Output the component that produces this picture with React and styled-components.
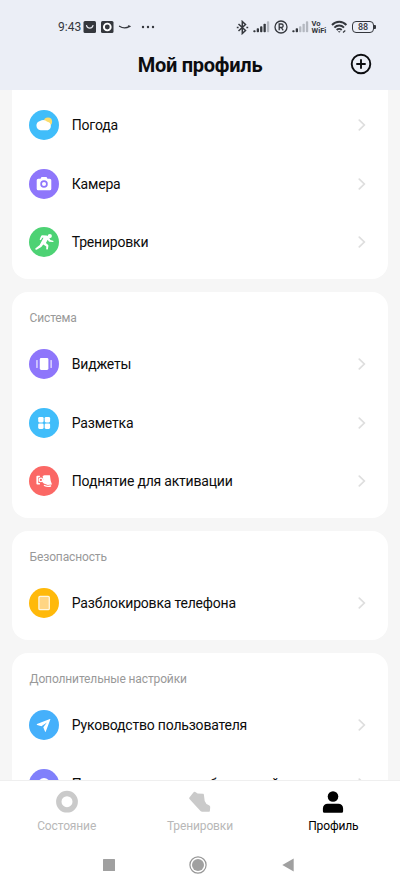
import React from 'react'
import styled, {createGlobalStyle} from 'styled-components'

const sections = [
  {
    items: [
      {label: 'Погода', icon: 'weather', color: '#40bdfa'},
      {label: 'Камера', icon: 'camera', color: '#8e76fb'},
      {label: 'Тренировки', icon: 'runner', color: '#4dd274'},
    ]
  },
  {
    title: 'Система',
    items: [
      {label: 'Виджеты', icon: 'widgets', color: '#8e76fb'},
      {label: 'Разметка', icon: 'layout', color: '#40bdfa'},
      {label: 'Поднятие для активации', icon: 'raise', color: '#fb6865'},
    ]
  },
  {
    title: 'Безопасность',
    items: [
      {label: 'Разблокировка телефона', icon: 'phone', color: '#ffb90a'},
    ]
  },
  {
    title: 'Дополнительные настройки',
    items: [
      {label: 'Руководство пользователя', icon: 'guide', color: '#45b0fb'},
      {label: 'Проверить наличие обновлений', icon: 'update', color: '#8080fb'},
    ]
  },
]

// drawn on a 30x30 grid, the coloured disc is the badge behind
const glyphs = {
  weather: <>
    <circle cx="19" cy="11.700" r="4.1" fill="#fbdc6c"/>
    <path d="M11.600 20.300a4.800 4.800 0 0 1-.6-9.400 6.200 6.200 0 0 1 7.300.9 4.400 4.400 0 0 1 .5 8.500z" fill="#fff"/>
  </>,
  camera: <>
    <path d="M9.200 9.700h2.300l1-1.600h5l1 1.600h2.300a1.500 1.500 0 0 1 1.500 1.500v8.500a1.500 1.500 0 0 1-1.500 1.500H9.200a1.500 1.500 0 0 1-1.500-1.500v-8.500a1.500 1.500 0 0 1 1.500-1.500z" fill="#fff"/>
    <circle cx="15" cy="15" r="2.900" fill="none" stroke="#8e76fb" strokeWidth="1.700"/>
  </>,
  runner: <g fill="#fff">
    <circle cx="20.800" cy="9.100" r="2.100"/>
    <path d="M13.200 8.300l4.300.2c1 .1 1.700.6 2.200 1.500l1.700 3.100 2.600.6c.8.200.7 1.400-.2 1.400l-3.300-.3c-.5-.1-.8-.3-1-.7l-.8-1.300-1.800 3.200 2 1.700c.4.400.6.800.5 1.300l-.5 2.900c-.2 1-1.700.8-1.700-.2l.1-2.200-3-2.100-1.600 2.200c-.2.300-.5.500-.8.700l-4.300 2.400c-1.100.5-1.900-.7-1-1.400l4.100-3.300 1.800-3.400 2-3.900-1.200.1-1.200 2c-.5.800-1.700.2-1.300-.7l1.300-3.100c.2-.5.600-.7 1.100-.7z"/>
  </g>,
  widgets: <g fill="#fff">
    <rect x="10.800" y="9" width="8.600" height="12" rx="1.400"/>
    <rect x="7.200" y="11" width="1.500" height="8" rx=".6" opacity=".7"/>
    <rect x="21.400" y="11" width="1.500" height="8" rx=".6" opacity=".7"/>
  </g>,
  layout: <g fill="#fff">
    <rect x="9.200" y="9" width="5.400" height="5.400" rx="1.300"/>
    <rect x="15.700" y="9" width="5.400" height="5.400" rx="1.300"/>
    <rect x="9.200" y="15.500" width="5.400" height="5.400" rx="1.300"/>
    <rect x="15.700" y="15.500" width="5.400" height="5.400" rx="1.300"/>
  </g>,
  raise: <>
    <path d="M8.300 9.700h2.600v1.500H9.300v5.700h1.600v1.500H8.300a.9.900 0 0 1-.9-.9v-6.900c0-.5.400-.9.900-.9z" fill="#fff"/>
    <path d="M13.600 9.900l1.800-.7h5.500l.8 5.500 1.300 3.700-4.300.5-3.900-1.500-2-2 1.500-1.900z" fill="#fff"/>
    <circle cx="11.900" cy="13.900" r="1.700" fill="#fb6865" stroke="#fff" strokeWidth="1.200"/>
    <path d="M15.400 19.500c1.800.9 4 1.100 6.200.5" fill="none" stroke="#fff" strokeWidth="1.300" strokeLinecap="round"/>
  </>,
  phone: <rect x="9.900" y="8.300" width="10.400" height="13.400" rx="1.200" fill="#ffd583" stroke="#fff6e0" strokeWidth="1.300"/>,
  guide: <path d="M8 14.100L20.900 9.100c.3-.1.500.1.400.4l-4.500 12.100c-.1.400-.6.400-.8 0l-1.700-4.400 3.600-4.700-5.500 3.700-4.300-1.300c-.4-.1-.5-.6-.1-.8z" fill="#fff"/>,
  update: <circle cx="15" cy="15" r="6" fill="#fff"/>,
}

const tabs = [
  {
    label: 'Состояние',
    icon: <circle cx="12" cy="11.700" r="8.200" fill="none" stroke="currentColor" strokeWidth="5.400"/>
  },
  {
    label: 'Тренировки',
    icon: <path d="M1.600 7.300L5.600 2.300C6 1.700 6.700 1.600 7.300 2L9.600 3.500 14.800 3.700C15.500 3.700 15.900 4.100 15.900 4.800L16.700 11 18.500 14 21 15.300C21.900 15.800 22.300 16.500 22.200 17.500L21.900 20.700C21.800 21.400 21.500 21.700 20.800 21.700H14.200C13.500 21.700 13 21.500 12.500 21L7.600 15.800 1.500 8.900C1 8.300 1.100 7.900 1.600 7.300z" fill="currentColor"/>
  },
  {
    label: 'Профиль',
    active: true,
    icon: <g fill="currentColor">
      <circle cx="12" cy="6.500" r="5.300"/>
      <path d="M6.600 13.700h10.800a4.700 4.700 0 0 1 4.700 4.700v2.900a1.500 1.500 0 0 1-1.500 1.500H3.400a1.500 1.500 0 0 1-1.500-1.500v-2.900a4.700 4.700 0 0 1 4.700-4.700z"/>
    </g>
  },
]

function Signal({level}) {
  return (
    <svg width="17" height="12" viewBox="0 0 17 12">
      {[2, 4, 6, 8.5, 11].map((h, i) => (
        <rect key={i} x={i * 3.4 + .3} y={11.3 - h} width="2.3" height={h} rx=".8" fill={i < level ? '#34373d' : '#b4b8c0'}/>
      ))}
    </svg>
  )
}

function StatusBar() {
  return (
    <Status>
      <StatusGroup>
        <Time>9:43</Time>
        <svg width="75" height="14" viewBox="0 0 75 14" fill="none">
          <rect x="1.500" y="1" width="12.500" height="12" rx="1.500" fill="#34373d"/>
          <path d="M4.500 5.500c1 3.500 5.500 3.500 6.500 0" stroke="#e5e8f0" strokeWidth="1.200" strokeLinecap="round"/>
          <rect x="19" y="1" width="12.500" height="12" rx="1.500" fill="#34373d"/>
          <circle cx="25.300" cy="7" r="3.400" stroke="#fff" strokeWidth="1.900"/>
          <path d="M37.500 6.300c3 2 7 2 10.200.1l-1.200-.5" stroke="#34373d" strokeWidth="1.300" strokeLinecap="round"/>
          <circle cx="61" cy="7" r="1.200" fill="#34373d"/>
          <circle cx="66" cy="7" r="1.200" fill="#34373d"/>
          <circle cx="71" cy="7" r="1.200" fill="#34373d"/>
        </svg>
      </StatusGroup>
      <StatusGroup $gap="4px">
        <svg width="13" height="15" viewBox="0 0 13 15" fill="none" stroke="#34373d" strokeWidth="1.500">
          <path d="M2.500 4l7 6.500-3.200 3V1.500l3.200 3-7 6.500"/>
          <path d="M.8 7.500h1.800M10.400 7.500h1.800"/>
        </svg>
        <Signal level={4}/>
        <svg width="14" height="14" viewBox="0 0 14 14" fill="none" stroke="#34373d" strokeWidth="1.300">
          <circle cx="7" cy="7" r="6"/>
          <path d="M5.200 10.300V4h2.200a1.700 1.700 0 0 1 0 3.500H5.200M7.300 7.500L9.200 10.300"/>
        </svg>
        <Signal level={2}/>
        <Volte><span>Vo</span><span>WiFi</span></Volte>
        <svg width="17" height="14" viewBox="0 0 17 14" fill="none" stroke="#34373d" strokeWidth="1.900">
          <path d="M1 5c4-4.400 10.400-4.400 14.400 0M3.400 7.600c2.700-2.900 6.900-2.900 9.600 0M5.700 10c1.500-1.500 3.500-1.500 5 0"/>
          <path d="M6.800 11.200h2.800l-1.400 1.600z" fill="#34373d" stroke="none"/>
          <path d="M12 12.500l2.300-2" strokeWidth="1.200"/>
        </svg>
        <BatteryWrap>
          <Battery>88</Battery>
          <BatteryTip/>
        </BatteryWrap>
      </StatusGroup>
    </Status>
  )
}

function App() {
  const cards = sections.map((section, i) => (
    <Card key={i}>
      {section.title && <CardTitle>{section.title}</CardTitle>}
      {section.items.map(item => (
        <Row key={item.label}>
          <Badge $color={item.color} viewBox="0 0 30 30">{glyphs[item.icon]}</Badge>
          <RowLabel>{item.label}</RowLabel>
          <Chevron viewBox="0 0 8 12"><path d="M1.300 1.200L6.300 6l-5 4.800"/></Chevron>
        </Row>
      ))}
    </Card>
  ))

  return (
    <Screen>
      <GlobalStyle/>
      <Header>
        <StatusBar/>
        <TitleBar>
          <span/>
          <Title>Мой профиль</Title>
          <AddButton aria-label="Добавить">
            <svg width="22" height="22" viewBox="0 0 22 22" fill="none" stroke="#0c0d10" strokeWidth="1.900" strokeLinecap="round">
              <circle cx="11" cy="11" r="9.300"/>
              <path d="M11 7v8M7 11h8"/>
            </svg>
          </AddButton>
        </TitleBar>
      </Header>
      <Content>{cards}</Content>
      <TabBar>
        {tabs.map(tab => (
          <Tab key={tab.label} $active={tab.active}>
            <svg width="24" height="24" viewBox="0 0 24 24">{tab.icon}</svg>
            <span>{tab.label}</span>
          </Tab>
        ))}
      </TabBar>
      <SystemNav>
        <svg width="12" height="12"><rect width="12" height="12" rx=".5" fill="#a0a0a0"/></svg>
        <svg width="18" height="18" viewBox="0 0 18 18">
          <circle cx="9" cy="9" r="8.100" fill="none" stroke="#979797" strokeWidth="1.200"/>
          <circle cx="9" cy="9" r="6" fill="#a0a0a0"/>
        </svg>
        <svg width="12" height="14" viewBox="0 0 12 14"><path d="M.300 7L11.700.500v13z" fill="#a0a0a0"/></svg>
      </SystemNav>
    </Screen>
  )
}

const GlobalStyle = createGlobalStyle`
  * {
    box-sizing: border-box;
  }

  body {
    margin: 0;
    font-family: Roboto, "Noto Sans", sans-serif;
    overflow: hidden;
  }

  svg {
    display: block;
    flex-shrink: 0;
  }
`;

const Screen = styled.div`
  display: flex;
  flex-direction: column;
  width: 400px;
  height: 889px;
  background: #f6f6f6;
`;

const Header = styled.header`
  flex: 0 0 90px;
  background: #ebeef6;
`;

const Status = styled.div`
  display: flex;
  justify-content: space-between;
  align-items: center;
  height: 39px;
  padding: 15px 24px 0 58px;
`;

const StatusGroup = styled.div`
  display: flex;
  align-items: center;
  gap: ${props => props.$gap || '0'};
`;

const Time = styled.span`
  width: 24px;
  font-size: 12px;
  color: #34373d;
  white-space: nowrap;
`;

const Volte = styled.span`
  display: flex;
  flex-direction: column;
  width: 15px;
  margin-left: -1px;
  font-size: 7.6px;
  font-weight: 700;
  line-height: 7.5px;
  color: #34373d;
`;

const BatteryWrap = styled.span`
  display: flex;
  align-items: center;
  margin-left: .5px;
`;

const Battery = styled.span`
  width: 22px;
  height: 12px;
  border: 1.5px solid #34373d;
  border-radius: 4px;
  font-size: 9px;
  font-weight: 500;
  line-height: 10px;
  text-align: center;
  color: #34373d;
`;

const BatteryTip = styled.span`
  width: 2px;
  height: 4px;
  border-radius: 0 1px 1px 0;
  background: #34373d;
`;

const TitleBar = styled.div`
  display: grid;
  grid-template-columns: 22px 1fr 22px;
  align-items: center;
  height: 50px;
  padding: 0 28px;
`;

const Title = styled.h1`
  margin: 0;
  padding-top: 2px;
  font-size: 20px;
  font-weight: 700;
  letter-spacing: -.25px;
  text-align: center;
  color: #0c0d10;
`;

const AddButton = styled.button`
  padding: 0;
  border: 0;
  background: none;
`;

const Content = styled.main`
  display: flex;
  flex-direction: column;
  flex: 1;
  gap: 12.75px;
  min-height: 0;
  padding: 0 12px;
  overflow: hidden;
`;

const Card = styled.section`
  flex-shrink: 0;
  padding-bottom: 8px;
  border-radius: 16px;
  background: #fff;

  &:first-child {
    padding-top: 5.75px;
    border-top-left-radius: 0;
    border-top-right-radius: 0;
  }
`;

const CardTitle = styled.h2`
  height: 42.75px;
  margin: 0;
  padding: 18px 17.5px 0;
  font-size: 12px;
  font-weight: 400;
  line-height: 16px;
  letter-spacing: -.13px;
  color: #999;
`;

const Row = styled.div`
  display: flex;
  align-items: center;
  height: 58.5px;
  padding: 0 22px 0 17px;
`;

const Badge = styled.svg`
  width: 30px;
  height: 30px;
  border-radius: 50%;
  background: ${props => props.$color};
`;

const RowLabel = styled.span`
  flex: 1;
  margin-left: 12.8px;
  font-size: 14px;
  letter-spacing: -.2px;
  white-space: nowrap;
  color: #0c0c0c;
`;

const Chevron = styled.svg`
  width: 8px;
  height: 12px;
  fill: none;
  stroke: #dedede;
  stroke-width: 1.7;
  stroke-linecap: round;
`;

const TabBar = styled.nav`
  display: grid;
  grid-template-columns: repeat(3, 1fr);
  flex: 0 0 60px;
  border-top: 1px solid #efefef;
  background: #fff;
`;

const Tab = styled.div`
  display: flex;
  flex-direction: column;
  align-items: center;
  padding-top: 9px;
  font-size: 12px;
  line-height: 24px;
  letter-spacing: -.13px;
  color: ${props => props.$active ? '#000' : '#cacaca'};

  span {
    color: ${props => props.$active ? '#000' : '#b8b8b8'};
  }
`;

const SystemNav = styled.div`
  display: flex;
  justify-content: space-between;
  align-items: center;
  flex: 0 0 49px;
  padding: 0 106px 0 102.5px;
  background: #fff;
`;

export default App
